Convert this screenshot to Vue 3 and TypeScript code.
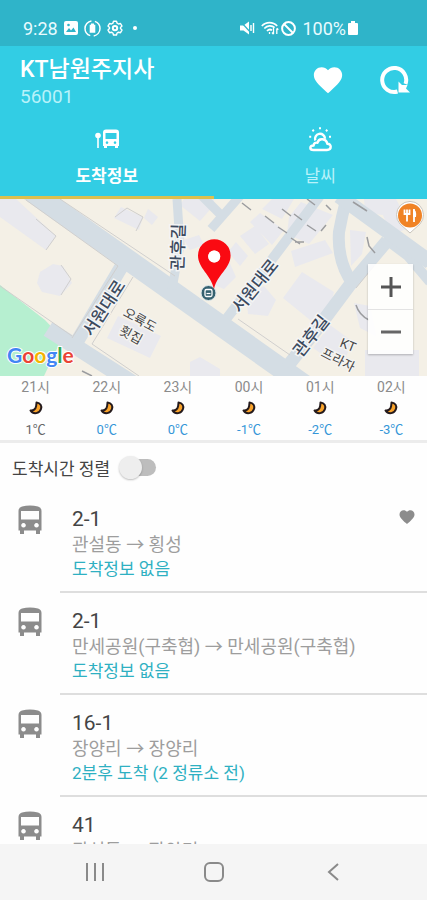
<script setup lang="ts">
import { ref } from 'vue'

interface Forecast {
  hour: string
  temp: number
}

interface Route {
  no: string
  path: string
  arrival: string
  favorite: boolean
}

const forecasts: Forecast[] = [
  { hour: '21시', temp: 1 },
  { hour: '22시', temp: 0 },
  { hour: '23시', temp: 0 },
  { hour: '00시', temp: -1 },
  { hour: '01시', temp: -2 },
  { hour: '02시', temp: -3 },
]

const routes: Route[] = [
  { no: '2-1', path: '관설동 → 횡성', arrival: '도착정보 없음', favorite: true },
  { no: '2-1', path: '만세공원(구축협) → 만세공원(구축협)', arrival: '도착정보 없음', favorite: false },
  { no: '16-1', path: '장양리 → 장양리', arrival: '2분후 도착 (2 정류소 전)', favorite: false },
  { no: '41', path: '관설동 → 장양리', arrival: '', favorite: false },
]

const activeTab = ref<'arrival' | 'weather'>('arrival')
const sortByArrival = ref(false)
</script>

<template>
  <div class="screen">
    <div class="status">
      <div class="status-group">
        <span>9:28</span>
        <svg width="14" height="14" viewBox="0 0 14 14">
          <rect width="14" height="14" rx="2" fill="#fff" />
          <path d="M2 11l3-4 2 2.500 2.500-3L12 11z" fill="#2fb4c9" />
          <circle cx="4.500" cy="4" r="1.300" fill="#2fb4c9" />
        </svg>
        <svg width="17" height="17" viewBox="0 0 17 17">
          <circle cx="8.500" cy="8.500" r="7.500" fill="none" stroke="#fff" stroke-width="1.500" stroke-dasharray="20 3.560" stroke-dashoffset="-14" />
          <path d="M7 3.500h3v1.200h1.300v8H5.700v-8H7z" fill="#fff" />
        </svg>
        <svg width="16" height="16" viewBox="0 0 16 16" fill="none" stroke="#fff">
          <path d="M6.500 1.200h3l.6 2 1.400.8 2-.5 1.500 2.600-1.500 1.500v1l1.500 1.500-1.500 2.600-2-.5-1.400.8-.6 2h-3l-.6-2-1.400-.8-2 .5L1 10.100l1.500-1.500v-1L1 6.100l1.500-2.600 2 .5 1.400-.8z" stroke-width="1.400" stroke-linejoin="round" />
          <circle cx="8" cy="8.100" r="2.200" stroke-width="2" />
        </svg>
        <i class="status-dot"></i>
      </div>
      <div class="status-group right">
        <svg width="15" height="14" viewBox="0 0 15 14">
          <path d="M0 4.500h3.500L9 .5v13L3.500 9.500H0z" fill="#fff" />
          <path d="M1 1l11 12" stroke="#2fb4c9" stroke-width="1.200" />
          <path d="M11 4v6M13.500 2v10" stroke="#fff" stroke-width="1.400" />
        </svg>
        <svg class="wifi" width="18" height="14" viewBox="0 0 18 14" fill="none" stroke="#fff" stroke-width="1.700">
          <path d="M.8 5C5 .500 12 .500 16.200 5M3.300 7.500c3-3.300 7.500-3.300 10.300-.8M6 10c1.500-1.600 3.500-1.800 5-.7" />
          <path d="M8.500 13v-2M12.500 7v6m-1.500-1.500l1.500 1.700M15.800 13V7.500m1.500 1.300l-1.500-1.500" stroke-width="1.300" />
        </svg>
        <svg width="15" height="15" viewBox="0 0 15 15" fill="none" stroke="#fff" stroke-width="2">
          <circle cx="7.500" cy="7.500" r="6.400" />
          <path d="M3 3l9 9" />
        </svg>
        <span class="percent">100%</span>
        <svg width="10" height="14" viewBox="0 0 10 14">
          <path d="M3 0h4v2h2a1 1 0 0 1 1 1v10a1 1 0 0 1-1 1H1a1 1 0 0 1-1-1V3a1 1 0 0 1 1-1h2z" fill="#fff" />
        </svg>
      </div>
    </div>

    <header class="header">
      <div class="stop">
        <div>
          <h1>KT남원주지사</h1>
          <p>56001</p>
        </div>
        <div class="actions">
          <button type="button" aria-label="즐겨찾기">
            <svg width="34" height="34" viewBox="0 0 24 24" fill="#fff">
              <path d="M12 21.350l-1.450-1.320C5.400 15.360 2 12.280 2 8.500 2 5.420 4.420 3 7.500 3c1.740 0 3.410.81 4.500 2.090C13.090 3.810 14.760 3 16.500 3 19.580 3 22 5.420 22 8.500c0 3.780-3.400 6.860-8.550 11.540z" />
            </svg>
          </button>
          <button type="button" aria-label="새로고침">
            <svg width="32" height="30" viewBox="0 0 32 30">
              <path d="M18.500 26.500A12 12 0 1 1 26.500 19" fill="none" stroke="#fff" stroke-width="4" />
              <path d="M19.500 16.500v11h11.500l-4-4 1.500-3.500-5.500 0z" fill="#fff" />
            </svg>
          </button>
        </div>
      </div>
      <nav class="tabs">
        <button type="button" :class="{ active: activeTab === 'arrival' }" @click="activeTab = 'arrival'">
          <svg width="28" height="28" viewBox="0 0 28 28">
            <circle cx="5" cy="9.500" r="2.800" fill="#fff" />
            <path d="M5 11v11" stroke="#fff" stroke-width="1.600" />
            <path fill-rule="evenodd" d="M13 3.500h10q3 0 3 3V20h-1v2h-3v-2h-8v2h-3v-2h-1V6.500q0-3 3-3zM12.500 7v6h11V7zM14 15.300a1.300 1.300 0 1 0 .01 0zM22 15.300a1.300 1.300 0 1 0 .01 0z" fill="#fff" />
          </svg>
          <span>도착정보</span>
        </button>
        <button type="button" :class="{ active: activeTab === 'weather' }" @click="activeTab = 'weather'">
          <svg width="28" height="28" viewBox="0 0 28 28" fill="none" stroke="#fff" stroke-width="2.400" stroke-linejoin="round">
            <path d="M7.500 24h13.500c5 0 4.800-6.300.3-6.300-1-5-8.300-6.500-9.800-1-2.500-.5-4 1-3.800 2.800C3 19.800 3.500 24 7.500 24z" />
            <path d="M9.300 14.500A5 5 0 1 1 19 12.800" />
            <path d="M14 1.200v2M6.500 3.800l1.300 1.400M21.300 3.800L20 5.200M3.200 10.800h2M23 10.800h2" stroke-width="2" />
          </svg>
          <span>날씨</span>
        </button>
      </nav>
    </header>

    <section class="map">
      <svg class="map-canvas" viewBox="0 199 427 177" preserveAspectRatio="xMidYMid slice">
        <rect y="199" width="427" height="177" fill="#f4f0e6" />
        <path d="M0 285L45 320L62 338L44 376H0z" fill="#b6efd0" />
        <g fill="#e9e9ee">
          <path d="M0 199h16l40 37-10 14L0 217z" />
          <path d="M40 272l13-8 10 2 9 17-12 13-18-4-5-9z" />
          <path d="M121 207l22 10-4 13-25-12zM148 209l10 8-6 8-8-7zM180 205l20 16 14-16v-6h-30zM184 240l15-5 5 10-14 5zM118 316l43 20-11 22-43-20z" />
          <path d="M250 222l10-9 24 17-12 15zM262 209l10-10 22 0-12 20zM289 217l12-15 32 13-24 29-22-10zM240 236l15-10 14 18-14 10zM228 252l8-10 12 14-8 10z" />
          <path d="M291 251l34-11 8 13-38 14zM283 298l19-26 32 20-6 22-18 6zM246 294l18-8 12 14-8 16-20-2z" />
          <path d="M350 230l16 2-4 22-11 12zM365 213l18 2 8 20 20-8-15-28h-32zM330 325l22 16-10 27-29-20zM354 303l16 3 6 30-16-8zM365 350h54v26h-54zM190 362l10-5 20 12v7h-30zM214 265l14-6 8 18-12 12-10-4z" />
        </g>
        <g fill="none" stroke="#d4dde4">
          <path d="M28 189L310 389" stroke-width="21" />
          <path d="M123 264L72 350" stroke-width="14" />
          <path d="M48 329L142 389" stroke-width="16" />
          <path d="M177 199L180 245L172 289" stroke-width="9" />
          <path d="M196 190L222 216M211 229L240 196" stroke-width="9" />
          <path d="M227 318L270 262L322 193" stroke-width="10" />
          <path d="M287 367L320 325L349 286L387 241" stroke-width="13" />
          <path d="M384 238L408 256L430 282" stroke-width="10" />
          <path d="M349 190Q343 210 339 232Q337 262 353 284" stroke-width="12" />
          <path d="M339 196L430 262" stroke-width="15" />
        </g>
        <g fill="none" stroke="#d0cfce" stroke-width="1">
          <path d="M26 200L118 266L72 338M60 199L175 276M133 277L92 344L139 376M0 286L72 336M238 319L290 355M356 288L374 266M36 219l20 17-10 14" />
          <path d="M61 265l10 14-10 16M115 217l12-9 16 9-7 14" />
        </g>
        <g fill="none" stroke="#9b9c9f" stroke-width="1.500">
          <path d="M265 216l9 7M278 227l9 6M291 238l9 6M282 209l9 7M294 214l8 6M307 199l8 6M307 225l9 6M353 202l14 9M367 237l2 9 6 7M356 305q3 10 13 15M82 371l10 5M295 242h9M326 205l5 5M242 203l9 7M326 225l-5 6" />
        </g>
        <g class="road-label">
          <text transform="translate(178 247) rotate(-88)">관후길</text>
          <text transform="translate(104 308) rotate(-57)">서원대로</text>
          <text transform="translate(255 286) rotate(-51)">서원대로</text>
          <text transform="translate(311 336) rotate(-52)">관후길</text>
        </g>
        <g class="place-label">
          <text transform="translate(140 320) rotate(29)">오륙도</text>
          <text transform="translate(131 335) rotate(29)">횟집</text>
          <text transform="translate(348 345) rotate(22)">KT</text>
          <text transform="translate(338 360) rotate(27)">프라자</text>
        </g>
        <circle cx="208.500" cy="293" r="7.500" fill="#35616f" stroke="#dfe9ec" />
        <rect x="205" y="289.500" width="7" height="7" rx="1.500" fill="#35616f" stroke="#fff" stroke-width="1.300" />
        <path d="M206.500 293.500h4" stroke="#fff" stroke-width="1.200" />
        <path fill-rule="evenodd" d="M214 289C211 275 198 268 198 255.500a16.300 16.300 0 0 1 32.600 0C230.600 268 217 275 214 289zM214.200 250.500a6 6 0 1 0 .01 0z" fill="#fa0a12" />
        <circle cx="214.200" cy="256.500" r="6" fill="#fff" />
        <path d="M400 224a13.500 13.500 0 1 1 20 0L410 233z" fill="#fff" stroke="#c9c5bd" />
        <circle cx="410" cy="215.500" r="12" fill="#f08325" />
        <path d="M404.500 209.500v4.500h5v-4.500M407 209.500v12M414 209v13" fill="none" stroke="#fff" stroke-width="1.800" />
        <path d="M413 209q4 1 3 8h-3z" fill="#fff" />
        <text class="google" x="7" y="363"><tspan fill="#4285f4">G</tspan><tspan fill="#ea4335">o</tspan><tspan fill="#f4b400">o</tspan><tspan fill="#4285f4">g</tspan><tspan fill="#34a853">l</tspan><tspan fill="#ea4335">e</tspan></text>
      </svg>
      <div class="zoom">
        <button type="button" aria-label="확대">
          <svg width="20" height="20" viewBox="0 0 20 20"><path d="M10 0v20M0 10h20" stroke="#555" stroke-width="3" /></svg>
        </button>
        <button type="button" aria-label="축소">
          <svg width="20" height="20" viewBox="0 0 20 20"><path d="M0 10h20" stroke="#666" stroke-width="3" /></svg>
        </button>
      </div>
    </section>

    <section class="forecast">
      <div v-for="f in forecasts" :key="f.hour" class="hour">
        <span class="time">{{ f.hour }}</span>
        <svg width="14" height="14" viewBox="0 0 14 14">
          <path d="M7.500 1.500c4 .5 5.500 3.500 4.500 6.500-1.500 4.500-7.500 6-10.500 1.500 2.500.3 4-.5 5-2.500.9-2 .9-3.500 1-5.500z" fill="#f9a32b" stroke="#241a1c" stroke-width="2" stroke-linejoin="round" />
        </svg>
        <span class="temp" :class="{ cold: f.temp <= 0 }">{{ f.temp }}℃</span>
      </div>
    </section>

    <label class="sort">
      <span>도착시간 정렬</span>
      <input v-model="sortByArrival" type="checkbox" role="switch" />
    </label>

    <ul class="routes">
      <li v-for="(r, i) in routes" :key="i">
        <svg class="bus" width="26" height="30" viewBox="0 0 26 30">
          <path fill-rule="evenodd" d="M5 1.500Q13-.5 21 1.500q3.500 1 3.500 4.500v19.500H23V29h-4v-3.500H7V29H3v-3.500H1.500V6q0-3.500 3.500-4.500zM4 6v8.500h18V6zM6.500 18a2.300 2.300 0 1 0 .01 0zM19.500 18a2.300 2.300 0 1 0 .01 0z" fill="#8c8c8c" />
        </svg>
        <div class="route">
          <h2>{{ r.no }}</h2>
          <p class="path">{{ r.path }}</p>
          <p v-if="r.arrival" class="arrival">{{ r.arrival }}</p>
        </div>
        <svg v-if="r.favorite" class="fav" width="18" height="18" viewBox="0 0 24 24" fill="#8c8c8c">
          <path d="M12 21.350l-1.450-1.320C5.400 15.360 2 12.280 2 8.500 2 5.420 4.420 3 7.500 3c1.740 0 3.410.81 4.500 2.090C13.090 3.810 14.760 3 16.500 3 19.580 3 22 5.420 22 8.500c0 3.780-3.400 6.860-8.550 11.540z" />
        </svg>
      </li>
    </ul>

    <footer class="navbar">
      <button type="button" aria-label="최근 앱">
        <svg width="20" height="20" viewBox="0 0 20 20"><path d="M2 1v18M10 1v18M18 1v18" stroke="#8a8a8a" stroke-width="2" /></svg>
      </button>
      <button type="button" aria-label="홈">
        <svg width="20" height="20" viewBox="0 0 20 20"><rect x="1" y="1" width="18" height="18" rx="5" fill="none" stroke="#8a8a8a" stroke-width="2" /></svg>
      </button>
      <button type="button" aria-label="뒤로">
        <svg width="20" height="20" viewBox="0 0 20 20"><path d="M15 2L6 10l9 8" fill="none" stroke="#8a8a8a" stroke-width="2" /></svg>
      </button>
    </footer>
  </div>
</template>

<style>
body {
  margin: 0;
  background: #fff;
}
</style>

<style scoped>
.screen {
  height: 100vh;
  display: flex;
  flex-direction: column;
  font-family: Roboto, "Noto Sans CJK KR", sans-serif;
  color: #444;
  background: #fefefe;
}
.screen > * {
  flex: none;
}
h1,
h2,
p,
ul {
  margin: 0;
  padding: 0;
  font-weight: 400;
}
svg {
  display: block;
}
button {
  border: 0;
  padding: 0;
  background: none;
  font: inherit;
  color: inherit;
  display: flex;
  align-items: center;
  justify-content: center;
  cursor: pointer;
}

.status {
  box-sizing: border-box;
  height: 46px;
  padding: 10px 69px 0 23px;
  display: flex;
  align-items: center;
  justify-content: space-between;
  background: #2fb4c9;
  color: #e8fbff;
  font-size: 18px;
}
.status-group {
  display: flex;
  align-items: center;
  gap: 6px;
}
.status-group.right {
  gap: 2px;
}
.wifi {
  margin-left: 4px;
}
.percent {
  margin-left: 4px;
}
.status-dot {
  width: 4px;
  height: 4px;
  margin-left: 4px;
  border-radius: 50%;
  background: #fff;
}

.header {
  background: #32cde4;
  color: #fff;
}
.stop {
  height: 68px;
  padding: 0 16px 0 20px;
  display: flex;
  justify-content: space-between;
}
.stop h1 {
  padding-top: 8px;
  font-size: 23px;
  font-weight: 500;
  line-height: 32px;
}
.stop p {
  font-size: 19px;
  line-height: 22px;
  color: #b8f2fa;
}
.actions {
  display: flex;
  align-items: center;
  gap: 34px;
}
.tabs {
  display: grid;
  grid-template-columns: 1fr 1fr;
}
.tabs button {
  box-sizing: border-box;
  height: 85px;
  padding-top: 4px;
  flex-direction: column;
  gap: 10px;
  border-bottom: 3px solid transparent;
  font-size: 17px;
  line-height: 24px;
  color: #b8f2fa;
}
.tabs button.active {
  color: #fff;
  font-weight: 700;
  border-bottom-color: #ddc04e;
}

.map {
  position: relative;
  height: 177px;
  overflow: hidden;
}
.map-canvas {
  width: 100%;
  height: 100%;
}
.road-label {
  font-size: 17px;
  font-weight: 500;
  text-anchor: middle;
  dominant-baseline: central;
  fill: #3c4a5e;
  stroke: #f4f5f5;
  stroke-width: 3px;
  paint-order: stroke;
}
.place-label {
  font-size: 13px;
  text-anchor: middle;
  dominant-baseline: central;
  fill: #444;
  stroke: #f4f3f0;
  stroke-width: 3px;
  paint-order: stroke;
}
.google {
  font-family: Lato, sans-serif;
  font-size: 21px;
  font-weight: 700;
  stroke: #fff;
  stroke-width: 2px;
  paint-order: stroke;
}
.zoom {
  position: absolute;
  right: 14px;
  bottom: 22px;
  width: 45px;
  background: rgba(255, 255, 255, 0.88);
  box-shadow: 0 1px 2px rgba(0, 0, 0, 0.25);
}
.zoom button {
  width: 100%;
  height: 45px;
}
.zoom button + button {
  border-top: 1px solid #e3e3e3;
}

.forecast {
  height: 64px;
  display: grid;
  grid-template-columns: repeat(6, 1fr);
  border-bottom: 3px solid #ececec;
}
.hour {
  display: flex;
  flex-direction: column;
  align-items: center;
}
.time {
  font-size: 14px;
  line-height: 22px;
  color: #8b8b8b;
}
.hour svg {
  margin: 3px 0 4px;
}
.temp {
  font-size: 13px;
  line-height: 22px;
  color: #666;
}
.temp.cold {
  color: #3596d8;
}

.sort {
  height: 48px;
  padding-left: 12px;
  display: flex;
  align-items: center;
  gap: 11px;
  font-size: 17px;
}
.sort input {
  appearance: none;
  position: relative;
  width: 35px;
  height: 17px;
  margin: 0;
  border-radius: 9px;
  background: #bdbdbd;
}
.sort input::before {
  content: "";
  position: absolute;
  top: -3px;
  left: -2px;
  width: 23px;
  height: 23px;
  border-radius: 50%;
  background: #eee;
  box-shadow: 0 1px 2px rgba(0, 0, 0, 0.25);
}
.sort input:checked::before {
  left: 14px;
  background: #32cde4;
}

.screen > .routes {
  flex: 1;
  min-height: 0;
  overflow-y: auto;
  scrollbar-width: none;
  list-style: none;
}
.routes li {
  position: relative;
  display: flex;
  align-items: flex-start;
  padding-left: 17px;
}
.bus {
  margin-top: 14px;
}
.route {
  flex: 1;
  margin-left: 17px;
  padding: 14px 0 9px 12px;
  border-bottom: 2px solid #dedede;
}
.route h2 {
  font-size: 21px;
  line-height: 28px;
  color: #444;
}
.route p {
  line-height: 24px;
}
.route .path {
  font-size: 18px;
  color: #9d9d9d;
}
.route .arrival {
  font-size: 17px;
  line-height: 25px;
  color: #2eb0c2;
}
.fav {
  position: absolute;
  top: 17px;
  right: 11px;
}

.navbar {
  height: 56px;
  padding: 0 35px;
  display: grid;
  grid-template-columns: repeat(3, 1fr);
  background: #f5f5f5;
}
</style>
